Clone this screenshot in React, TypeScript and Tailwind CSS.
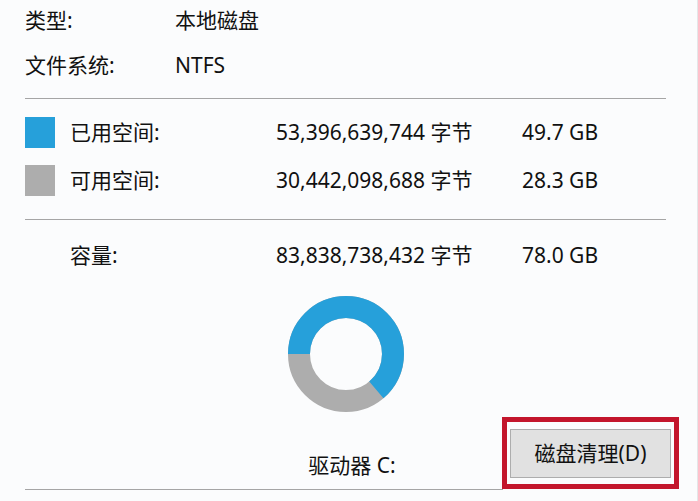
import React from "react";

const font = { fontFamily: '"Noto Sans", "Noto Sans CJK SC", sans-serif' };

function Donut() {
  const r = 47;
  const c = 2 * Math.PI * r;
  const used = 49.7 / 78.0;
  return (
    <svg width="116" height="116" viewBox="0 0 116 116">
      <circle cx="58" cy="58" r={r} fill="none" stroke="#adadad" strokeWidth="22" />
      <circle
        cx="58"
        cy="58"
        r={r}
        fill="none"
        stroke="#26a0da"
        strokeWidth="22"
        strokeDasharray={`${used * c} ${c}`}
        transform="rotate(180 58 58)"
      />
    </svg>
  );
}

export default function App() {
  return (
    <div
      className="w-[698px] h-[501px] bg-[#fbfcfd] border-r border-[#e4e6e8] pl-[25px] pr-[18px] overflow-hidden text-[21px] text-[#111] leading-none"
      style={font}
    >
      <div className="pr-[13px]">
        <div className="flex items-center h-[41px]">
          <div className="w-[150px]">类型:</div>
          <div>本地磁盘</div>
        </div>
        <div className="flex items-center h-[49px]">
          <div className="w-[150px]">文件系统:</div>
          <div>NTFS</div>
        </div>
        <div className="mt-[8px] h-px bg-[#a5a5a5]" />
        <div className="grid grid-cols-[45px_206px_246px_1fr] items-center mt-[17px] h-[32px]">
          <div className="w-[30px] h-[31px] bg-[#26a0da]" />
          <div>已用空间:</div>
          <div>53,396,639,744 字节</div>
          <div>49.7 GB</div>
        </div>
        <div className="grid grid-cols-[45px_206px_246px_1fr] items-center mt-[16px] h-[32px]">
          <div className="w-[30px] h-[31px] bg-[#adadad]" />
          <div>可用空间:</div>
          <div>30,442,098,688 字节</div>
          <div>28.3 GB</div>
        </div>
        <div className="mt-[23px] h-px bg-[#a5a5a5]" />
        <div className="grid grid-cols-[45px_206px_246px_1fr] items-center mt-[19px] h-[32px]">
          <div />
          <div>容量:</div>
          <div>83,838,738,432 字节</div>
          <div>78.0 GB</div>
        </div>
        <div className="flex justify-center mt-[25px]">
          <Donut />
        </div>
      </div>
      <div className="grid grid-cols-[1fr_auto_1fr] mt-[5px] h-[72px]">
        <div />
        <div className="self-end mb-[12px] h-[24px] flex items-center">驱动器 C:</div>
        <div className="justify-self-end border-[5px] border-[#c3162c] pt-[7px] pb-[6px] px-[3px]">
          <div className="w-[161px] h-[49px] bg-[#e1e1e1] border border-[#adadad] flex items-center justify-center">
            磁盘清理(D)
          </div>
        </div>
      </div>
      <div className="h-px w-[478px] bg-[#a5a5a5]" />
    </div>
  );
}
